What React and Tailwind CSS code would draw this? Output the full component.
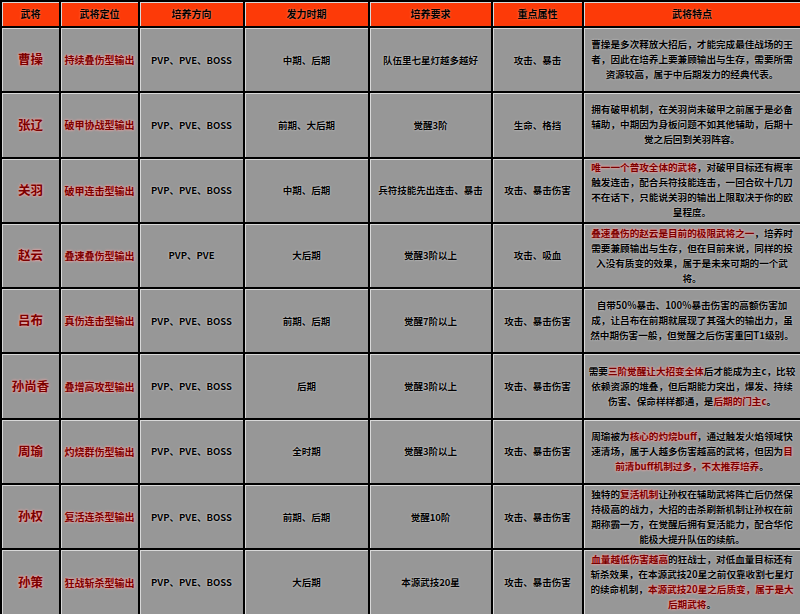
import React from "react";

const headers = ["武将", "武将定位", "培养方向", "发力时期", "培养要求", "重点属性", "武将特点"];
const widths = ["w-[59px]", "w-[79px]", "w-[105px]", "w-[125px]", "w-[123px]", "w-[91px]", "w-[218px]"];

const generals = [
  {
    name: "曹操",
    role: "持续叠伤型输出",
    mode: "PVP、PVE、BOSS",
    period: "中期、后期",
    need: "队伍里七星灯越多越好",
    attr: "攻击、暴击",
    desc: [["曹操是多次释放大招后，才能完成最佳战场的王者，因此在培养上要兼顾输出与生存，需要所需资源较高，属于中后期发力的经典代表。", false]],
  },
  {
    name: "张辽",
    role: "破甲协战型输出",
    mode: "PVP、PVE、BOSS",
    period: "前期、大后期",
    need: "觉醒3阶",
    attr: "生命、格挡",
    desc: [["拥有破甲机制，在关羽尚未破甲之前属于是必备辅助，中期因为身板问题不如其他辅助，后期十觉之后回到关羽阵容。", false]],
  },
  {
    name: "关羽",
    role: "破甲连击型输出",
    mode: "PVP、PVE、BOSS",
    period: "中期、后期",
    need: "兵符技能先出连击、暴击",
    attr: "攻击、暴击伤害",
    desc: [
      ["唯一一个普攻全体的武将", true],
      ["，对破甲目标还有概率触发连击，配合兵符技能连击，一回合砍十几刀不在话下，只能说关羽的输出上限取决于你的欧皇程度。", false],
    ],
  },
  {
    name: "赵云",
    role: "叠速叠伤型输出",
    mode: "PVP、PVE",
    period: "大后期",
    need: "觉醒3阶以上",
    attr: "攻击、吸血",
    desc: [
      ["叠速叠伤的赵云是目前的极限武将之一", true],
      ["，培养时需要兼顾输出与生存，但在目前来说，同样的投入没有质变的效果，属于是未来可期的一个武将。", false],
    ],
  },
  {
    name: "吕布",
    role: "真伤连击型输出",
    mode: "PVP、PVE、BOSS",
    period: "前期、后期",
    need: "觉醒7阶以上",
    attr: "攻击、暴击伤害",
    desc: [["自带50%暴击、100%暴击伤害的高额伤害加成，让吕布在前期就展现了其强大的输出力，虽然中期伤害一般，但觉醒之后伤害重回T1级别。", false]],
  },
  {
    name: "孙尚香",
    role: "叠增高攻型输出",
    mode: "PVP、PVE、BOSS",
    period: "后期",
    need: "觉醒3阶以上",
    attr: "攻击、暴击伤害",
    desc: [
      ["需要", false],
      ["三阶觉醒让大招变全体", true],
      ["后才能成为主c，比较依赖资源的堆叠，但后期能力突出，爆发、持续伤害、保命样样都通，是", false],
      ["后期的门主c", true],
      ["。", false],
    ],
  },
  {
    name: "周瑜",
    role: "灼烧群伤型输出",
    mode: "PVP、PVE、BOSS",
    period: "全时期",
    need: "觉醒3阶以上",
    attr: "攻击、暴击伤害",
    desc: [
      ["周瑜被为", false],
      ["核心的灼烧buff", true],
      ["，通过触发火焰领域快速清场，属于人越多伤害越高的武将，但因为", false],
      ["目前清buff机制过多，不太推荐培养", true],
      ["。", false],
    ],
  },
  {
    name: "孙权",
    role: "复活连杀型输出",
    mode: "PVP、PVE、BOSS",
    period: "前期、后期",
    need: "觉醒10阶",
    attr: "攻击、暴击伤害",
    desc: [
      ["独特的", false],
      ["复活机制", true],
      ["让孙权在辅助武将阵亡后仍然保持极高的战力，大招的击杀刷新机制让孙权在前期称霸一方，在觉醒后拥有复活能力，配合华佗能极大提升队伍的续航。", false],
    ],
  },
  {
    name: "孙策",
    role: "狂战斩杀型输出",
    mode: "PVP、PVE、BOSS",
    period: "大后期",
    need: "本源武技20星",
    attr: "攻击、暴击伤害",
    desc: [
      ["血量越低伤害越高", true],
      ["的狂战士，对低血量目标还有斩杀效果，在本源武技20星之前仅靠收割七星灯的续命机制，", false],
      ["本源武技20星之后质变，属于是大后期武将", true],
      ["。", false],
    ],
  },
];

const cell =
  "border-2 border-black shadow-[inset_1px_1px_0_#d8d8d8] text-center align-middle font-bold";
const redText = "text-[#7a0000] [text-shadow:0_0_2px_#ff9a9a,0_0_3px_#f7b0b0]";
const darkText = "text-black [text-shadow:0_0_2px_#e2e2e2]";

const App = () => {
  return (
    <div
      className="w-[800px] h-[614px] overflow-hidden bg-white"
      style={{ fontFamily: '"Noto Sans CJK SC", "Noto Sans", sans-serif' }}
    >
      <table className="w-[800px] table-fixed border-collapse">
        <colgroup>
          {widths.map((w, i) => (
            <col key={i} className={w} />
          ))}
        </colgroup>
        <thead>
          <tr className="h-[26px] bg-[#fd3a08]">
            {headers.map((h) => (
              <th key={h} className={`${cell} text-[10px] leading-none text-black [text-shadow:0_0_2px_#ff9a7a]`}>
                {h}
              </th>
            ))}
          </tr>
        </thead>
        <tbody>
          {generals.map((g) => (
            <tr key={g.name} className="h-[65.3px] bg-[#979797]">
              <td className={`${cell} text-[12.5px] ${redText}`}>{g.name}</td>
              <td className={`${cell} text-[10px] ${redText}`}>{g.role}</td>
              <td className={`${cell} text-[9.5px] ${darkText}`}>{g.mode}</td>
              <td className={`${cell} text-[9.5px] ${darkText}`}>{g.period}</td>
              <td className={`${cell} text-[9.5px] ${darkText}`}>{g.need}</td>
              <td className={`${cell} text-[9.5px] ${darkText}`}>{g.attr}</td>
              <td className={`${cell} px-[4px] text-[9.6px] leading-[15px] ${darkText}`}>
                {g.desc.map(([t, red], i) => (
                  <span key={i} className={red ? redText : ""}>
                    {t}
                  </span>
                ))}
              </td>
            </tr>
          ))}
        </tbody>
      </table>
    </div>
  );
};

export default App;
